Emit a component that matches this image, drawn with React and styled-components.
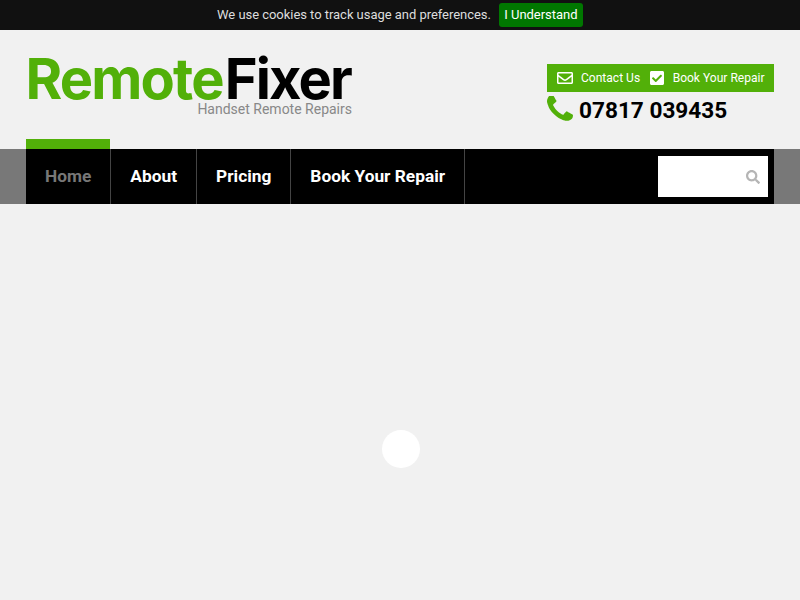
import styled, { createGlobalStyle } from "styled-components";
import { FaRegEnvelope, FaCheckSquare, FaSearch } from "react-icons/fa";

const GlobalStyle = createGlobalStyle`
  html, body {
    margin: 0;
    padding: 0;
    background: #f1f1f1;
    font-family: Roboto, "Liberation Sans", sans-serif;
  }
`;

const Page = styled.div`
  position: relative;
  width: 800px;
  height: 600px;
  overflow: hidden;
  background: #f1f1f1;
`;

const CookieBar = styled.div`
  display: flex;
  align-items: center;
  justify-content: center;
  gap: 8px;
  height: 30px;
  background: #111;
  color: #ddd;
  font-size: 13px;
  letter-spacing: -0.04px;
`;

const CookieText = styled.span`
  margin-top: -2px;
`;

const CookieButton = styled.button`
  height: 24px;
  padding: 0 5.5px 2px;
  border: none;
  border-radius: 3px;
  background: #007700;
  color: #fff;
  font: 13px Roboto, sans-serif;
  letter-spacing: -0.04px;
`;

const Header = styled.header`
  display: flex;
  justify-content: space-between;
  height: 119px;
  padding: 0 26px 0 28px;
`;

const LogoBlock = styled.div`
  display: flex;
  flex-direction: column;
  align-items: flex-end;
  width: 324px;
  padding-top: 17px;
`;

const Logo = styled.div`
  height: 56px;
  margin-right: 1px;
  font-family: Inter, sans-serif;
  font-weight: 700;
  font-size: 56px;
  line-height: 64px;
  letter-spacing: -1.85px;
  white-space: nowrap;
  color: #000;
`;

const LogoGreen = styled.span`
  margin-right: 2px;
  color: #52b009;
`;

const Tagline = styled.div`
  margin-top: -2px;
  font-size: 14px;
  line-height: 16px;
  color: #888;
`;

const ContactBlock = styled.div`
  display: flex;
  flex-direction: column;
  width: 227px;
  padding-top: 34px;
`;

const ContactBar = styled.div`
  display: flex;
  align-items: center;
  height: 28px;
  padding-left: 10px;
  background: #52b009;
  color: #fff;
  font-size: 12.05px;
  white-space: nowrap;
`;

const ContactLink = styled.a`
  display: flex;
  flex-shrink: 0;
  align-items: center;
  gap: 8px;
  margin-right: 8.5px;
`;

const PhoneRow = styled.div`
  display: flex;
  align-items: center;
  gap: 6px;
  height: 36px;
  font-size: 22.6px;
  font-weight: 700;
  color: #000;
`;

const PhoneIcon = styled.svg`
  width: 26px;
  height: 26px;
  margin-top: -3px;
  fill: #52b009;
`;

const NavBand = styled.nav`
  background: #787878;
  padding: 0 26px;
`;

const NavInner = styled.div`
  display: flex;
  justify-content: space-between;
  height: 55px;
  background: #000;
`;

const NavList = styled.div`
  display: flex;
`;

const NavItem = styled.a`
  position: relative;
  display: flex;
  align-items: center;
  padding: 0 19px 2px;
  border-right: 1px solid #444;
  font-size: 17.32px;
  font-weight: 700;
  color: ${(props) => (props.$active ? "#777" : "#fff")};

  &::before {
    content: "";
    display: ${(props) => (props.$active ? "block" : "none")};
    position: absolute;
    left: 0;
    right: 0;
    top: -10px;
    height: 10px;
    background: #52b009;
  }
`;

const SearchBox = styled.div`
  display: flex;
  align-items: center;
  justify-content: flex-end;
  box-sizing: border-box;
  width: 110px;
  height: 41px;
  margin: 7px 6px 0 0;
  padding-right: 8px;
  background: #fff;
  color: #b5b5b5;
  font-size: 14px;
`;

const Loader = styled.div`
  position: absolute;
  left: 382px;
  top: 430px;
  width: 38px;
  height: 38px;
  border-radius: 50%;
  background: #fff;
`;

export default function App() {
  return (
    <Page>
      <GlobalStyle />
      <CookieBar>
        <CookieText>We use cookies to track usage and preferences.</CookieText>
        <CookieButton>I Understand</CookieButton>
      </CookieBar>
      <Header>
        <LogoBlock>
          <Logo>
            <LogoGreen>Remote</LogoGreen>Fixer
          </Logo>
          <Tagline>Handset Remote Repairs</Tagline>
        </LogoBlock>
        <ContactBlock>
          <ContactBar>
            <ContactLink>
              <FaRegEnvelope size={16} />
              Contact Us
            </ContactLink>
            <ContactLink>
              <FaCheckSquare size={16} />
              Book Your Repair
            </ContactLink>
          </ContactBar>
          <PhoneRow>
            <PhoneIcon viewBox="0 192 1408 1408">
              <path d="M1408 1240q0 27-10 70.5t-21 68.5q-21 50-122 106-94 51-186 51-27 0-53-3.5t-57.5-12.5-47-14.5-55.5-20.5-49-18q-98-35-175-83-127-79-264-216t-216-264q-48-77-83-175-3-9-18-49t-20.5-55.5-14.5-47-12.5-57.5-3.5-53q0-92 51-186 56-101 106-122 25-11 68.5-21t70.5-10q14 0 21 3 18 6 53 76 11 19 30 54t35 63.5 31 53.5q3 4 17.5 25t21.5 35.5 7 28.5q0 20-28.5 50t-62 55-62 53-28.5 46q0 9 5 22.5t8.5 20.5 14 24 11.5 19q76 137 174 235t235 174q2 1 19 11.5t24 14 20.5 8.5 22.5 5q18 0 46-28.5t53-62 55-62 50-28.5q14 0 28.5 7t35.5 21.5 25 17.5q25 15 53.5 31t63.5 35 54 30q70 35 76 53 3 7 3 21z" />
            </PhoneIcon>
            07817 039435
          </PhoneRow>
        </ContactBlock>
      </Header>
      <NavBand>
        <NavInner>
          <NavList>
            <NavItem $active>Home</NavItem>
            <NavItem>About</NavItem>
            <NavItem>Pricing</NavItem>
            <NavItem>Book Your Repair</NavItem>
          </NavList>
          <SearchBox>
            <FaSearch />
          </SearchBox>
        </NavInner>
      </NavBand>
      <Loader />
    </Page>
  );
}
